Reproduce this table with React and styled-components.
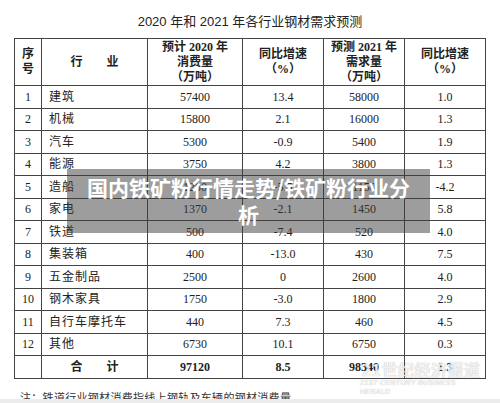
import React from 'react'
import styled, { createGlobalStyle } from 'styled-components'

const Global = createGlobalStyle`
  html, body { margin: 0; padding: 0; background: #fff; }
  body { font-family: "Liberation Serif", "Noto Sans CJK SC", serif; }
`

const Page = styled.div`
  position: relative;
  width: 500px;
  height: 403px;
  overflow: hidden;
  background: #fff;
  display: flex;
  flex-direction: column;
`

const Title = styled.div`
  height: 38px;
  box-sizing: border-box;
  padding-top: 12px;
  text-align: center;
  font-family: "Liberation Sans", "Noto Sans CJK SC", sans-serif;
  font-size: 13px;
  line-height: 20px;
  color: #222;
`

const Table = styled.table`
  margin-left: 14px;
  width: 471px;
  table-layout: fixed;
  border-collapse: collapse;
  border: 1.5px solid #333;
  color: #222;
  font-size: 12px;
`

const Head = styled.th`
  height: 46px;
  padding: 0;
  border: 1px solid #444;
  font-weight: 700;
  font-size: 12px;
  line-height: 15px;
  text-align: center;
  vertical-align: middle;
  white-space: pre-line;
`

const Row = styled.tr`
  height: 22.5px;
`

const Cell = styled.td`
  padding: ${p => (p.$align === 'left' ? '0 0 0 7px' : '0')};
  border: 1px solid #444;
  text-align: ${p => p.$align || 'center'};
  font-weight: ${p => (p.$bold ? 700 : 400)};
  letter-spacing: ${p => (p.$spread ? '1px' : '0')};
  vertical-align: middle;
  line-height: 14px;
  white-space: pre;
`

const Note = styled.div`
  height: 20px;
  overflow: hidden;
  box-sizing: border-box;
  padding: 13px 0 0 20px;
  font-size: 11px;
  line-height: 12px;
  letter-spacing: 0.3px;
  color: #333;
`

const Strip = styled.div`
  flex: 1;
  background: #ececec;
`

const Overlay = styled.div`
  position: absolute;
  left: 67px;
  top: 169px;
  width: 363px;
  height: 64px;
  box-sizing: border-box;
  padding: 5px 12px;
  background: rgba(60, 60, 60, 0.5);
  color: #fff;
  font-family: "Noto Sans CJK SC", sans-serif;
  font-weight: 700;
  font-size: 21px;
  line-height: 27px;
  text-align: center;
`

const Watermark = styled.div`
  position: absolute;
  left: 360px;
  top: 360px;
  width: 122px;
  display: flex;
  flex-direction: column;
  align-items: center;
  color: rgba(255, 255, 255, 0.85);
  text-shadow: 0 0 1px rgba(0, 0, 0, 0.35);
  font-family: "Noto Sans CJK SC", sans-serif;
`

const MarkName = styled.span`
  font-size: 16px;
  font-weight: 700;
  line-height: 18px;
  letter-spacing: 0.5px;
`

const MarkSub = styled.span`
  font-family: "Liberation Sans", sans-serif;
  font-style: italic;
  font-size: 7px;
  line-height: 9px;
  letter-spacing: 0.3px;
`

const rows = [
  ['1', '建筑', '57400', '13.4', '58000', '1.0'],
  ['2', '机械', '15800', '2.1', '16000', '1.3'],
  ['3', '汽车', '5300', '-0.9', '5400', '1.9'],
  ['4', '能源', '3750', '4.2', '3800', '1.3'],
  ['5', '造船', '1200', '-5.5', '1150', '-4.2'],
  ['6', '家电', '1370', '-2.1', '1450', '5.8'],
  ['7', '铁道', '500', '-7.4', '520', '4.0'],
  ['8', '集装箱', '400', '-13.0', '430', '7.5'],
  ['9', '五金制品', '2500', '0', '2600', '4.0'],
  ['10', '钢木家具', '1750', '-3.0', '1800', '2.9'],
  ['11', '自行车摩托车', '440', '7.3', '460', '4.5'],
  ['12', '其他', '6730', '10.1', '6750', '0.3'],
]

export default function App() {
  return (
    <Page>
      <Global />
      <Title>2020 年和 2021 年各行业钢材需求预测</Title>
      <Table>
        <colgroup>
          <col style={{ width: 27 }} />
          <col style={{ width: 106 }} />
          <col style={{ width: 95 }} />
          <col style={{ width: 81 }} />
          <col style={{ width: 81 }} />
          <col style={{ width: 81 }} />
        </colgroup>
        <thead>
          <tr>
            <Head>{'序\n号'}</Head>
            <Head>行　　业</Head>
            <Head>{'预计 2020 年\n消费量\n（万吨）'}</Head>
            <Head>{'同比增速\n（%）'}</Head>
            <Head>{'预测 2021 年\n需求量\n（万吨）'}</Head>
            <Head>{'同比增速\n（%）'}</Head>
          </tr>
        </thead>
        <tbody>
          {rows.map(r => (
            <Row key={r[0]}>
              <Cell>{r[0]}</Cell>
              <Cell $align="left" $spread>{r[1]}</Cell>
              <Cell>{r[2]}</Cell>
              <Cell>{r[3]}</Cell>
              <Cell>{r[4]}</Cell>
              <Cell>{r[5]}</Cell>
            </Row>
          ))}
          <Row>
            <Cell />
            <Cell $bold>合　　计</Cell>
            <Cell $bold>97120</Cell>
            <Cell $bold>8.5</Cell>
            <Cell $bold>98340</Cell>
            <Cell $bold>1.3</Cell>
          </Row>
        </tbody>
      </Table>
      <Note>注：铁道行业钢材消费指线上钢轨及车辆的钢材消费量。</Note>
      <Strip />
      <Overlay>国内铁矿粉行情走势/铁矿粉行业分析</Overlay>
      <Watermark>
        <MarkName>21世纪经济报道</MarkName>
        <MarkSub>21ST CENTURY BUSINESS HERALD</MarkSub>
      </Watermark>
    </Page>
  )
}
